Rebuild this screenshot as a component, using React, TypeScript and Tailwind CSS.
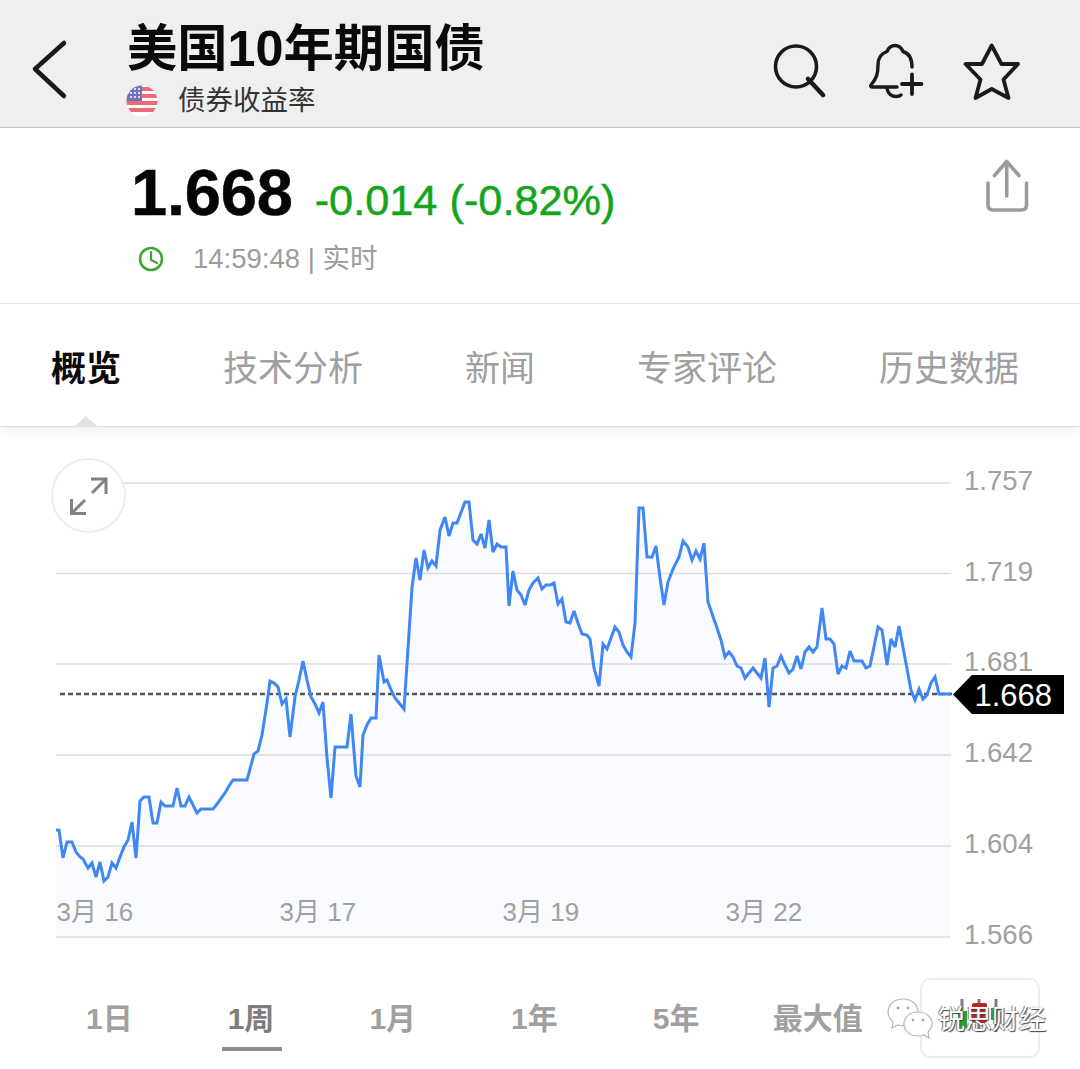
const pts = "56,830 59,830 63,858 67,842 72,842 76,852 80,857 83,859 88,868 92,863 96,877 100,862 104,881 108,877 112,863 116,868 120,857 124,847 128,840 132,822 136,858 140,801 144,797 149,797 153,823 157,823 161,802 165,806 173,806 177,788 181,806 185,806 189,797 197,813 201,809 213,809 217,804 222,797 225,793 229,786 233,780 247,780 250,769 254,754 258,751 262,735 267,703 270,681 274,683 278,687 282,704 286,699 290,737 295,697 299,680 303,661 307,680 311,697 315,704 319,713 323,702 327,758 331,798 335,747 347,747 351,714 356,776 360,787 363,735 367,725 371,718 376,718 379,655 384,682 387,680 392,692 395,698 404,709 412,588 416,558 420,580 424,550 428,568 432,561 436,566 440,530 445,517 449,536 453,523 457,523 465,502 469,502 473,540 477,544 481,534 485,548 489,520 493,552 497,544 501,547 506,547 509,606 513,571 517,590 521,595 525,605 529,590 533,583 538,578 542,589 546,585 550,585 554,583 558,604 562,599 566,622 570,623 574,611 578,623 582,634 587,635 590,639 594,668 599,686 603,644 607,649 611,638 615,627 619,632 623,645 627,652 631,657 635,623 639,508 643,508 647,557 652,557 656,546 660,578 664,605 668,582 673,569 679,557 683,541 688,547 692,560 696,551 700,559 704,543 708,602 717,628 721,640 725,657 729,652 733,657 737,666 741,668 745,678 753,668 761,678 765,658 769,707 773,668 777,666 781,656 785,665 789,673 793,669 797,656 801,669 805,652 809,647 813,652 817,647 822,608 826,639 830,639 834,644 838,674 842,666 846,668 850,651 854,661 862,661 866,668 870,666 878,627 882,630 887,665 891,639 895,647 899,626 911,690 915,700 919,689 923,699 927,695 931,683 935,677 939,694 951,694";
const grid = [483, 573.5, 664, 755, 846, 937];
const yLabels = ["1.757", "1.719", "1.681", "1.642", "1.604", "1.566"];
const xLabels = ["3月 16", "3月 17", "3月 19", "3月 22"];
const ranges = ["1日", "1周", "1月", "1年", "5年", "最大值"];
const tabs = ["概览", "技术分析", "新闻", "专家评论", "历史数据"];

export default function App() {
  return (
    <div className="w-[1080px] h-[1069px] overflow-hidden bg-white font-['Liberation_Sans','Noto_Sans_CJK_SC',sans-serif]">
      {/* Header */}
      <header className="flex h-[128px] items-start border-b border-[#c6c6c6] bg-[#efefef] pl-[30px] pr-[56px]">
        <svg className="mt-[38px] shrink-0" width="40" height="62" viewBox="30 38 40 62" fill="none" stroke="#1a1a1a" strokeWidth="4.5" strokeLinecap="round" strokeLinejoin="round">
          <path d="M64 43 L35 69 L64 96" />
        </svg>
        <div className="ml-[57px] mt-[19px]">
          <h1 className="h-[60px] text-[50.3px] leading-[60px] font-bold text-[#0a0a0a]">美国10年期国债</h1>
          <div className="mt-[5px] flex h-[34px] items-center">
            <svg width="32" height="32" viewBox="125 83 32 32" className="-ml-[1.5px]">
              <defs>
                <clipPath id="flag"><circle cx="141" cy="99" r="15.5" /></clipPath>
              </defs>
              <g clipPath="url(#flag)">
                <rect x="125" y="83" width="32" height="32" fill="#fff" />
                <rect x="125" y="85" width="32" height="4" fill="#ef6a78" />
                <rect x="125" y="92" width="32" height="4" fill="#ef6a78" />
                <rect x="125" y="99" width="32" height="4" fill="#ef6a78" />
                <rect x="125" y="106" width="32" height="4" fill="#ef6a78" />
                <rect x="125" y="83" width="16" height="16" fill="#6f74b8" />
                <g fill="#fff">
                  <circle cx="134" cy="87" r="1" /><circle cx="138" cy="87" r="1" />
                  <circle cx="130" cy="91" r="1" /><circle cx="134" cy="91" r="1" /><circle cx="138" cy="91" r="1" />
                  <circle cx="130" cy="95" r="1" /><circle cx="134" cy="95" r="1" /><circle cx="138" cy="95" r="1" />
                </g>
              </g>
            </svg>
            <span className="ml-[20.5px] text-[27.5px] leading-[34px] text-[#333]">债券收益率</span>
          </div>
        </div>
        <div className="ml-auto mt-[40px] flex gap-[35px]">
          <svg width="60" height="60" viewBox="770 40 60 60" fill="none" stroke="#1a1a1a" strokeWidth="3.6" strokeLinecap="round">
            <circle cx="796" cy="66.5" r="20.5" />
            <path d="M808 79 L823 95" strokeWidth="4.6" />
          </svg>
          <svg width="60" height="60" viewBox="865 40 60 60" fill="none" stroke="#1a1a1a" strokeWidth="3.4" strokeLinecap="round" strokeLinejoin="round">
            <path d="M912 67 C912 58 908 53 903 51.5 C901 47 898 45.5 895 45.5 C892 45.5 889 47 887 51.5 C881 53.5 878 58 878 65 C878 73 877 78 871 85 C870 86.5 871 87 872.5 87 L897 87" />
            <path d="M887 88.5 C888 94 892 96.5 896 96.5 C898 96.5 900 96 901 95" />
            <path d="M912 74.5 L912 94 M902 84 L921.5 84" strokeWidth="3.8" />
          </svg>
          <svg width="64" height="60" viewBox="960 40 64 60" fill="none" stroke="#1a1a1a" strokeWidth="3.8" strokeLinecap="round" strokeLinejoin="round">
            <path d="M991.7 45.5 L1001.5 64 L1018 64 L1003.5 79.5 L1008.5 98 L991.7 89 L975.5 98 L980.5 79.5 L965.5 64 L982 64 Z" />
          </svg>
        </div>
      </header>

      {/* Quote */}
      <section className="h-[176px] border-b border-[#ececec] pl-[131px] pr-[48px]">
        <div className="flex items-start justify-between pt-[26px]">
          <div className="flex items-baseline pt-[7px]">
            <span className="text-[65px] leading-[64px] font-bold tracking-[-0.2px] text-[#050505] [-webkit-text-stroke:0.5px_#050505]">1.668</span>
            <span className="ml-[22px] text-[43.3px] leading-[64px] text-[#14a51c] [-webkit-text-stroke:0.5px_#14a51c]">-0.014 (-0.82%)</span>
          </div>
          <svg className="mt-[2px]" width="48" height="60" viewBox="984 155 48 60" fill="none" stroke="#9b9b9b" strokeWidth="3.6" strokeLinecap="round" strokeLinejoin="round">
            <path d="M1006.7 195 L1006.7 161 M994.5 174.5 L1006.7 160.5 L1019 174.5" />
            <path d="M988 182 L988 204 Q988 209 993 209 L1021.5 209 Q1026.5 209 1026.5 204 L1026.5 182" />
          </svg>
        </div>
        <div className="mt-[10px] flex h-[34px] items-center pl-[7px]">
          <svg width="26" height="26" viewBox="138 244 26 26" fill="none" stroke="#3fa535" strokeLinecap="round" strokeLinejoin="round">
            <circle cx="151" cy="257" r="11" strokeWidth="2.6" />
            <path d="M151 250 L151 258 L157 261" strokeWidth="2.2" />
          </svg>
          <span className="ml-[29px] text-[27.5px] leading-[34px] text-[#9c9c9c]">14:59:48 | 实时</span>
        </div>
      </section>

      {/* Tabs */}
      <nav className="relative z-10 flex h-[123px] items-center justify-between border-b border-[#e0e0e0] bg-white pl-[51px] pr-[61px] pt-[8px] shadow-[0_4px_10px_rgba(0,0,0,0.06)]">
        {tabs.map((t, i) => (
          <span key={t} className={i === 0 ? "text-[35px] leading-[44px] font-bold text-[#0a0a0a]" : "text-[35px] leading-[44px] text-[#a0a0a0]"}>
            {t}
          </span>
        ))}
        <svg className="absolute bottom-[-1px] left-[74px]" width="24" height="11" viewBox="0 0 24 11">
          <path d="M0 11 L12 0 L24 11 Z" fill="#e2e2e2" />
        </svg>
      </nav>

      {/* Chart */}
      <section className="relative flex h-[523px]">
        <svg className="shrink-0" width="964" height="523" viewBox="0 427 964 523" fill="none">
          <polygon points={`${pts} 951,937 56,937`} fill="#f9fbff" />
          {grid.map((y) => (
            <line key={y} x1="56" x2="951" y1={y} y2={y} stroke="#dcdcdc" strokeWidth="1.6" />
          ))}
          <line x1="60" x2="952" y1="694" y2="694" stroke="#555555" strokeWidth="2.5" strokeDasharray="5 3" />
          <polyline points={pts} stroke="#3f87f5" strokeWidth="3" strokeLinejoin="miter" strokeMiterlimit="3" />
        </svg>
        <div className="pt-[8px]">
          {yLabels.map((l) => (
            <div key={l} className="flex h-[90.8px] items-center text-[27.6px] text-[#a0a0a0]">{l}</div>
          ))}
        </div>

        {/* Expand button */}
        <div className="absolute left-[51px] top-[31px] flex h-[75px] w-[75px] items-center justify-center rounded-full border-2 border-[#eeeeee] bg-white">
          <svg width="40" height="40" viewBox="0 0 40 40" fill="none" stroke="#808080" strokeWidth="3">
            <path d="M23 17 L37 3 M22 3 L37 3 L37 18" />
            <path d="M16 24 L2.5 37.5 M2.5 23 L2.5 37.5 L17 37.5" />
          </svg>
        </div>

        {/* Date labels */}
        <div className="absolute left-[56.5px] top-[469px] flex">
          {xLabels.map((l) => (
            <span key={l} className="w-[223px] text-[26px] leading-[32px] text-[#a0a0a0]">{l}</span>
          ))}
        </div>

        {/* Price tag */}
        <div className="absolute left-[953px] top-[248px] flex h-[39px] w-[111px] items-center justify-end bg-black pr-[12px] pt-[2px] text-[31px] leading-[39px] text-white [clip-path:polygon(0_50%,17%_0,100%_0,100%_100%,17%_100%)]">
          1.668
        </div>
      </section>

      {/* Range selector */}
      <div className="relative mt-[28px] flex h-[80px] items-center pl-[38.5px]">
        {ranges.map((r, i) => (
          <div key={r} className="relative flex h-[80px] w-[141.7px] items-center justify-center">
            <span className={i === 1 ? "text-[30px] font-bold text-[#7d7d7d]" : "text-[30px] font-bold text-[#a0a0a0]"}>{r}</span>
            {i === 1 && <div className="absolute bottom-[7px] left-[41.5px] h-[4px] w-[60px] bg-[#8c8c8c]" />}
          </div>
        ))}
        <div className="ml-[31px] flex h-[80px] w-[120px] shrink-0 items-center justify-center rounded-[10px] border-2 border-[#eeeeee]">
          <svg width="60" height="50" viewBox="950 995 60 50">
            <g stroke="#7d7d7d" strokeWidth="3">
              <line x1="962" x2="962" y1="1001" y2="1034" />
              <line x1="979" x2="979" y1="1001" y2="1034" />
              <line x1="996" x2="996" y1="1001" y2="1034" />
            </g>
            <rect x="958" y="1013" width="9" height="17" fill="#2ca02c" />
            <rect x="972" y="1005" width="15" height="20" rx="2" fill="#c5201f" />
            <rect x="991" y="1010" width="9" height="12" fill="#2ca02c" />
          </svg>
        </div>

        {/* WeChat watermark */}
        <div className="absolute left-[887px] top-[19px] flex items-center">
          <svg width="48" height="46" viewBox="887 998 48 46">
            <g fill="#ffffff" stroke="#b5b5b5" strokeWidth="1.2">
              <path d="M903 1000 C894 1000 888 1006 888 1013 C888 1017 890 1020 893 1023 L892 1029 L898 1026 C902 1027 906 1027 909 1025 C917 1024 918 1017 918 1013 C918 1006 912 1000 903 1000 Z" />
              <path d="M918 1013 C910 1013 904 1018 904 1025 C904 1032 910 1037 918 1037 C920 1037 922 1037 924 1036 L929 1039 L928 1033 C930 1031 932 1028 932 1025 C932 1018 926 1013 918 1013 Z" />
            </g>
            <g fill="#a8a8a8">
              <circle cx="898" cy="1009" r="1.4" /><circle cx="908" cy="1009" r="1.4" />
              <circle cx="913" cy="1021" r="1.4" /><circle cx="923" cy="1021" r="1.4" />
            </g>
          </svg>
        </div>
        <span className="absolute left-[938px] top-[24px] text-[27px] leading-[36px] text-white [text-shadow:1px_1px_1px_#444,-1px_0_1px_#777]">锐思财经</span>
      </div>
    </div>
  );
}
